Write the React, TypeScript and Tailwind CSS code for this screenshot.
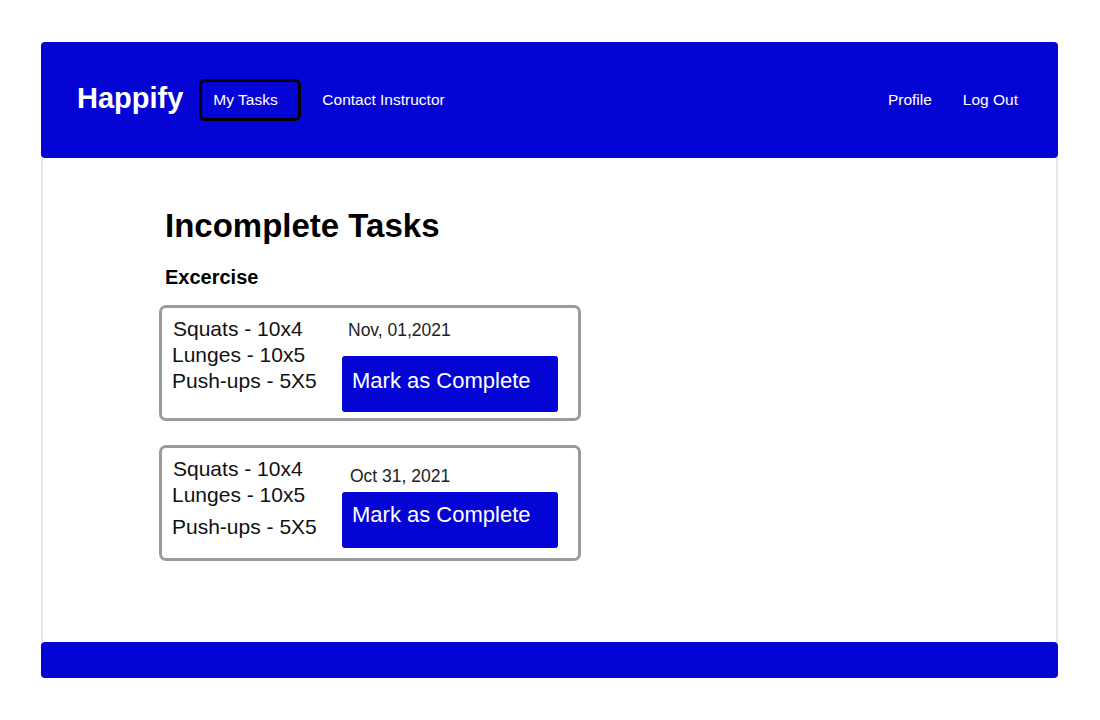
const font = { fontFamily: '"Liberation Sans", Arial, sans-serif' }

type Task = {
  date: string
  dateOffset: string
  datePad: string
  btnGap: string
  btnPad: string
  pushGap: string
}

const tasks: Task[] = [
  { date: "Nov, 01,2021", dateOffset: "pl-[6px]", datePad: "pt-[11px]", btnGap: "mt-[15px]", btnPad: "pt-[12px]", pushGap: "" },
  { date: "Oct 31, 2021", dateOffset: "pl-[8px]", datePad: "pt-[17px]", btnGap: "mt-[5px]", btnPad: "pt-[10px]", pushGap: "mt-[6px]" },
]

function TaskCard({ task }: { task: Task }) {
  return (
    <div className="w-[422px] h-[116px] border-[3px] border-[#9a9a9a] rounded-[7px] bg-white flex">
      <div className="w-[180px] pl-[10px] pt-[8px] text-[21px] leading-[26px] text-[#111]">
        <div className="pl-px">Squats - 10x4</div>
        <div>Lunges - 10x5</div>
        <div className={task.pushGap}>Push-ups - 5X5</div>
      </div>
      <div className={`w-[216px] ${task.datePad}`}>
        <div className={`${task.dateOffset} text-[17.5px] leading-[22px] text-[#222]`}>{task.date}</div>
        <button
          className={`${task.btnGap} w-[216px] h-[56px] rounded-[3px] bg-[#0404d4] text-white text-[22px] leading-[26px] text-left pl-[10px] ${task.btnPad} flex items-start`}
        >
          Mark as Complete
        </button>
      </div>
    </div>
  )
}

export default function App() {
  return (
    <div className="min-h-screen bg-white pl-[41px] pr-[42px] pt-[42px]" style={font}>

      {/* Header */}
      <nav className="h-[116px] bg-[#0404d4] rounded-[4px] flex items-center justify-between pl-[36px] pr-[40px] text-white">
        <div className="flex items-center">
          <span className="text-[29px] font-bold leading-none -mt-[4px]">Happify</span>
          <span className="ml-[16px] w-[102px] h-[42px] border-[3px] border-black rounded-[6px] flex items-center pl-[11px] text-[15.5px]">
            My Tasks
          </span>
          <span className="ml-[21px] text-[15.5px]">Contact Instructor</span>
        </div>
        <div className="flex items-center gap-[31px] text-[15.5px]">
          <span>Profile</span>
          <span>Log Out</span>
        </div>
      </nav>

      {/* Main */}
      <main className="h-[484px] border-x-2 border-[#e6e6e6] pl-[116px] pt-[48px]">
        <h1 className="pl-[6px] text-[33px] font-bold leading-[40px] text-black">Incomplete Tasks</h1>
        <h2 className="pl-[6px] mt-[19px] text-[20px] font-bold leading-[24px] text-black">Excercise</h2>
        <div className="mt-[16px] flex flex-col gap-[24px]">
          {tasks.map((t) => (
            <TaskCard key={t.date} task={t} />
          ))}
        </div>
      </main>

      {/* Footer */}
      <footer className="h-[36px] bg-[#0404d4] rounded-[4px]" />
    </div>
  )
}
